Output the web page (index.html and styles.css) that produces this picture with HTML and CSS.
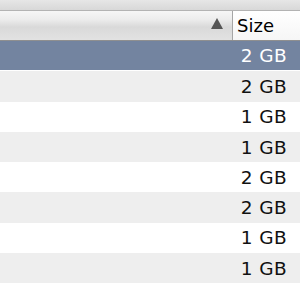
FILE: index.html
```html
<!DOCTYPE html>
<html lang="en">
<head>
    <meta charset="UTF-8">
    <title>Disks</title>
    <link rel="stylesheet" href="styles.css">
</head>
<body>
    <div class="window">
        <div class="toolbar"></div>

        <!-- column headers -->
        <div class="header">
            <div class="header-cell name-col">
                <svg class="sort-arrow" width="12" height="11" viewBox="0 0 12 11">
                    <path d="M6 0 L12 11 L0 11 Z" fill="#555"/>
                </svg>
            </div>
            <div class="header-cell size-col">Size</div>
        </div>

        <div class="rows">
            <div class="row selected"><div class="name"></div><div class="size">2 GB</div></div>
            <div class="row"><div class="name"></div><div class="size">2 GB</div></div>
            <div class="row"><div class="name"></div><div class="size">1 GB</div></div>
            <div class="row"><div class="name"></div><div class="size">1 GB</div></div>
            <div class="row"><div class="name"></div><div class="size">2 GB</div></div>
            <div class="row"><div class="name"></div><div class="size">2 GB</div></div>
            <div class="row"><div class="name"></div><div class="size">1 GB</div></div>
            <div class="row"><div class="name"></div><div class="size">1 GB</div></div>
            <div class="row"><div class="name"></div><div class="size"></div></div>
        </div>
    </div>
</body>
</html>
```

FILE: styles.css
```css
* {
    margin: 0;
    padding: 0;
    box-sizing: border-box;
}

body {
    width: 300px;
    height: 300px;
    overflow: hidden;
    background: #fff;
    font-family: 'DejaVu Sans', Verdana, sans-serif;
    font-size: 18.5px;
    color: #111;
}

.toolbar {
    height: 10px;
    background: linear-gradient(#e6e6e6, #d8d8d8);
}

.header {
    display: flex;
    height: 31px;
    border-top: 1px solid #b3b3b3;
    border-bottom: 1px solid #8f8f8f;
    background: linear-gradient(#f6f6f6 0%, #ececec 30%, #d9d9d9 55%, #e2e2e2 100%);
}

.header-cell {
    display: flex;
    align-items: center;
}

.name-col {
    width: 233px;
    justify-content: flex-end;
    padding-right: 9px;
    border-right: 1px solid #a6a6a6;
}

.sort-arrow {
    margin-bottom: 4px;
}

.size-col {
    flex: 1;
    padding-left: 4px;
    padding-bottom: 1px;
    background: linear-gradient(#ffffff, #f6f6f6);
    font-size: 18px;
    color: #000;
}

.row {
    display: flex;
    align-items: center;
    height: 30.3px;
}

.row:nth-child(even) {
    background: #eeeeee;
}

.row.selected {
    background: #7384a0;
    color: #fff;
    border-bottom: 1px solid #fff;
}

.name {
    flex: 1;
}

.size {
    padding-right: 13px;
    text-align: right;
    letter-spacing: 0.4px;
}
```
